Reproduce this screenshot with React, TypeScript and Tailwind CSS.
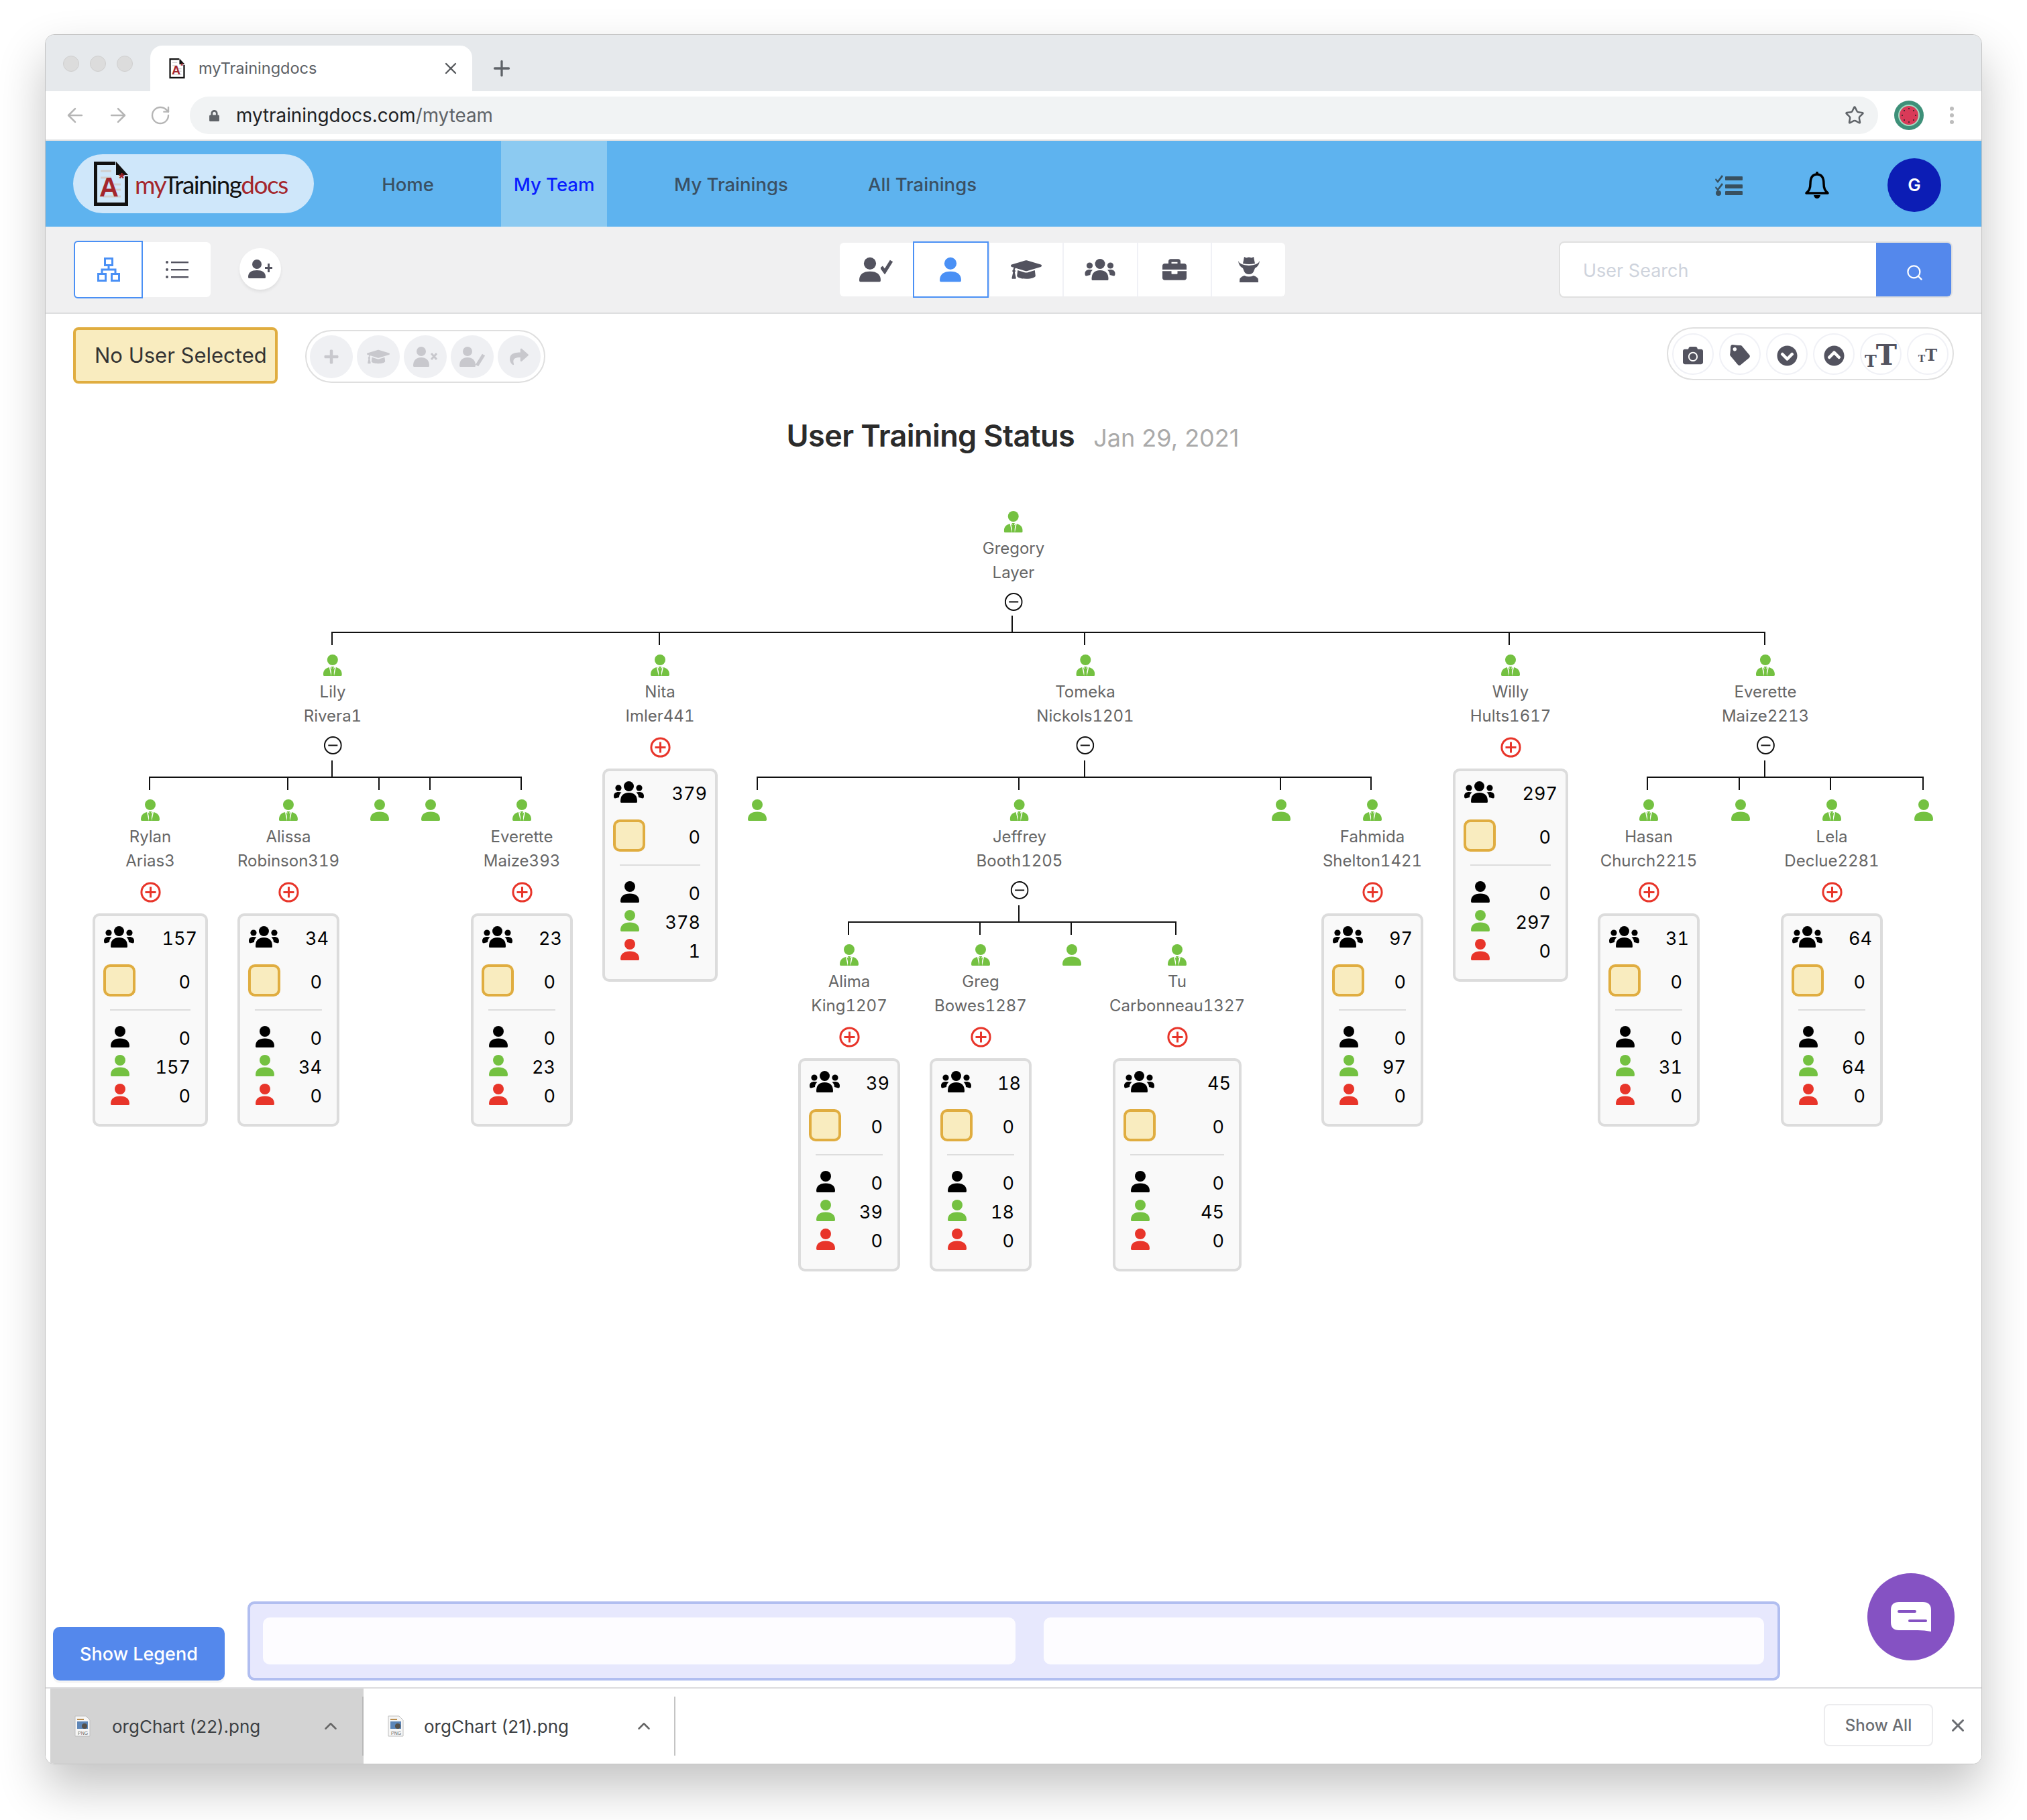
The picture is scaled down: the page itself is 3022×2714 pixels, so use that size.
import React from "react";
import { ArrowLeft, ArrowRight, RotateCw, Plus, X, Star, ChevronUp, Search } from "lucide-react";
import { FaGraduationCap, FaBriefcase, FaTag, FaCamera, FaChevronCircleDown, FaChevronCircleUp, FaPlus, FaShare, FaLock } from "react-icons/fa";

const BODY = "M1.5 32 Q0 32 0 30 C0 22.5 5 18.5 14 18.5 C23 18.5 28 22.5 28 30 Q28 32 26.5 32Z";

function Person({ color, className }: { color: string; className?: string }) {
  return (
    <svg viewBox="0 0 28 32" className={className ?? "w-[28px] h-[32px]"} fill={color}>
      <ellipse cx="14" cy="8" rx="8" ry="8" />
      <path d={BODY} />
    </svg>
  );
}

function TiePerson() {
  return (
    <svg viewBox="0 0 28 32" className="w-[28px] h-[32px]" fill="#74c141">
      <ellipse cx="14" cy="8" rx="8" ry="8" />
      <path d={BODY} />
      <path d="M9.5 18 L12.6 32 M18.5 18 L15.4 32" stroke="#fff" strokeWidth="1.5" fill="none" />
      <path d="M10.5 17.5 H17.5 V19 L15.6 21 H12.4 L10.5 19Z" fill="#fff" />
      <path d="M11.8 18 H16.2 L15.2 20.6 L16.2 32 H11.8 L12.8 20.6Z" fill="#74c141" />
    </svg>
  );
}

function Group({ color, className }: { color: string; className?: string }) {
  return (
    <svg viewBox="0 0 45 32" className={className ?? "w-[45px] h-[32px]"} fill={color}>
      <ellipse cx="22.5" cy="7.5" rx="7.5" ry="7.5" />
      <circle cx="7" cy="10" r="4.6" />
      <circle cx="38" cy="10" r="4.6" />
      <path d="M11 32 Q10 32 10 30 C10 22 14 17 22.5 17 C31 17 35 22 35 30 Q35 32 34 32Z" />
      <path d="M0 22 C0 18 3 16 7 16 L11.5 16.5 C9 19 8 21 8 24 L2 25.5 Q0 25.5 0 22Z" />
      <path d="M45 22 C45 18 42 16 38 16 L33.5 16.5 C36 19 37 21 37 24 L43 25.5 Q45 25.5 45 22Z" />
    </svg>
  );
}

function Toggle({ open }: { open: boolean }) {
  if (open) {
    return (
      <svg viewBox="0 0 27 27" className="w-[27px] h-[27px] mt-[12px] mb-[1px]" fill="none" stroke="#111" strokeWidth="2">
        <circle cx="13.5" cy="13.5" r="12.4" />
        <path d="M6.5 13.5 H20.5" />
      </svg>
    );
  }
  return (
    <svg viewBox="0 0 31 31" className="w-[31px] h-[31px] mt-[13px]" fill="none" stroke="#e8352a" strokeWidth="3">
      <circle cx="15.5" cy="15.5" r="13.6" />
      <path d="M7.5 15.5 H23.5 M15.5 7.5 V23.5" />
    </svg>
  );
}

function Num({ v }: { v: number }) {
  return <span className="pt-[5px] text-[27px] leading-none tabular-nums text-black">{v}</span>;
}

function Card({ w, total, green, red }: { w: number; total: number; green: number; red: number }) {
  return (
    <div className="mt-[16px] h-[318px] border-4 border-[#dcdcdc] rounded-[10px] bg-[#f9f9f9] flex flex-col" style={{ width: w }}>
      <div className="mt-[15px] h-[32px] pl-[13px] pr-[12px] flex items-center justify-between">
        <Group color="#000" />
        <Num v={total} />
      </div>
      <div className="mt-[25px] h-[48px] pl-[12px] pr-[22px] flex items-center justify-between">
        <div className="w-[48px] h-[48px] border-[4px] border-[#e0ad40] bg-[#f9ecbf] rounded-[10px]" />
        <Num v={0} />
      </div>
      <div className="mt-[19px] mx-[22px] h-[2px] bg-[#dddddd]" />
      <div className="mt-[23px] h-[32px] pl-[23px] pr-[22px] flex items-center justify-between">
        <Person color="#000" />
        <Num v={0} />
      </div>
      <div className="mt-[11px] h-[32px] pl-[23px] pr-[22px] flex items-center justify-between">
        <Person color="#74c141" />
        <Num v={green} />
      </div>
      <div className="mt-[11px] h-[32px] pl-[23px] pr-[22px] flex items-center justify-between">
        <Person color="#e8352a" />
        <Num v={red} />
      </div>
    </div>
  );
}

type N = { x: number; y: number; a?: string; b?: string; open?: boolean; w?: number; t?: number; g?: number; r?: number };
const L0 = 762, L1 = 976, L2 = 1192, L3 = 1408;

const nodes: N[] = [
  { x: 1511, y: L0, a: "Gregory", b: "Layer", open: true },
  { x: 496, y: L1, a: "Lily", b: "Rivera1", open: true },
  { x: 984, y: L1, a: "Nita", b: "Imler441", w: 172, t: 379, g: 378, r: 1 },
  { x: 1618, y: L1, a: "Tomeka", b: "Nickols1201", open: true },
  { x: 2252, y: L1, a: "Willy", b: "Hults1617", w: 172, t: 297, g: 297, r: 0 },
  { x: 2632, y: L1, a: "Everette", b: "Maize2213", open: true },
  { x: 224, y: L2, a: "Rylan", b: "Arias3", w: 172, t: 157, g: 157, r: 0 },
  { x: 430, y: L2, a: "Alissa", b: "Robinson319", w: 152, t: 34, g: 34, r: 0 },
  { x: 566, y: L2 },
  { x: 642, y: L2 },
  { x: 778, y: L2, a: "Everette", b: "Maize393", w: 152, t: 23, g: 23, r: 0 },
  { x: 1129, y: L2 },
  { x: 1520, y: L2, a: "Jeffrey", b: "Booth1205", open: true },
  { x: 1910, y: L2 },
  { x: 2046, y: L2, a: "Fahmida", b: "Shelton1421", w: 152, t: 97, g: 97, r: 0 },
  { x: 2458, y: L2, a: "Hasan", b: "Church2215", w: 152, t: 31, g: 31, r: 0 },
  { x: 2595, y: L2 },
  { x: 2731, y: L2, a: "Lela", b: "Declue2281", w: 152, t: 64, g: 64, r: 0 },
  { x: 2868, y: L2 },
  { x: 1266, y: L3, a: "Alima", b: "King1207", w: 152, t: 39, g: 39, r: 0 },
  { x: 1462, y: L3, a: "Greg", b: "Bowes1287", w: 152, t: 18, g: 18, r: 0 },
  { x: 1598, y: L3 },
  { x: 1755, y: L3, a: "Tu", b: "Carbonneau1327", w: 192, t: 45, g: 45, r: 0 },
];

const OX = 68, OY = 740;

function Node({ n }: { n: N }) {
  return (
    <div className="absolute w-max -translate-x-1/2 flex flex-col items-center" style={{ left: n.x - OX, top: n.y - OY }}>
      {n.a ? <TiePerson /> : <Person color="#74c141" />}
      {n.a && (
        <div className="mt-[6px] text-center text-[24px] leading-[36px] tabular-nums text-[#666666]">
          <div>{n.a}</div>
          <div>{n.b}</div>
        </div>
      )}
      {n.a && <Toggle open={!!n.open} />}
      {n.w && <Card w={n.w} total={n.t!} green={n.g!} red={n.r!} />}
    </div>
  );
}

type Conn = { px: number; y0: number; y: number; kids: number[]; yb: number };
const conns: Conn[] = [
  { px: 1509, y0: 918, y: 943, yb: 962, kids: [495, 983, 1617, 2250, 2631] },
  { px: 495, y0: 1134, y: 1159, yb: 1178, kids: [223, 429, 565, 641, 777] },
  { px: 1617, y0: 1134, y: 1159, yb: 1178, kids: [1129, 1519, 1909, 2044] },
  { px: 2631, y0: 1134, y: 1159, yb: 1178, kids: [2456, 2593, 2729, 2867] },
  { px: 1519, y0: 1350, y: 1375, yb: 1394, kids: [1265, 1461, 1597, 1753] },
];

function Connectors() {
  return (
    <svg className="absolute left-0 top-0 w-[2886px] h-[1600px]" viewBox="0 0 2886 1600" fill="none" stroke="#111" strokeWidth="2">
      {conns.map((c, i) => (
        <g key={i}>
          <path d={`M${c.px - OX} ${c.y0 - OY} V${c.y - OY}`} />
          <path d={`M${c.kids[0] - OX - 1} ${c.y - OY} H${c.kids[c.kids.length - 1] - OX + 1}`} />
          {c.kids.map((k) => (
            <path key={k} d={`M${k - OX} ${c.y - OY} V${c.yb - OY}`} />
          ))}
        </g>
      ))}
    </svg>
  );
}

function DocIcon({ className }: { className: string }) {
  return (
    <svg viewBox="0 0 51 66" className={className}>
      <path d="M0 0 H32 V5 H5 V61 H46 V22 H51 V66 H0Z" fill="#111" />
      <path d="M33 0 L51 20 H33Z" fill="#111" />
      <path d="M10 14 H26 M10 24 H26 M28 34 H40 M26 42 H40 M14 52 H40" stroke="#cfcfcf" strokeWidth="3" />
      <text x="8" y="52" fontFamily="'Liberation Sans', sans-serif" fontWeight="700" fontSize="40" fill="#a4262c">
        A<tspan dy="-20" fontSize="22">*</tspan>
      </text>
    </svg>
  );
}

function ActionCircle({ children }: { children: React.ReactNode }) {
  return <div className="w-[64px] h-[64px] rounded-full bg-[#eff0f3] flex items-center justify-center text-[#c8c8cd]">{children}</div>;
}

function ToolCircle({ children }: { children: React.ReactNode }) {
  return <div className="w-[62px] h-[62px] rounded-full bg-white border-2 border-[#f0f1f6] pt-[5px] flex items-center justify-center text-[#53535f]">{children}</div>;
}

function TabBtn({ children, active }: { children: React.ReactNode; active?: boolean }) {
  return (
    <div className={active ? "w-[113px] h-[84px] -my-[2px] border-2 border-[#4a90f5] bg-white flex items-center justify-center z-10" : "flex-1 h-full flex items-center justify-center border-l-2 first:border-l-0 border-[#f0f1f6]"}>
      {children}
    </div>
  );
}

function Cowboy() {
  return (
    <svg viewBox="0 0 32 38" className="w-[32px] h-[38px]" fill="#53535f">
      <path d="M9 0 L12 1.5 L16 0.5 L20 1.5 L23 0 L25 10 Q16 12 7 10Z" />
      <path d="M0 6 Q2 12 16 13 Q30 12 32 6 Q31 14 25 17 L23 22 Q21 26 16 26 Q11 26 9 22 L7 17 Q1 14 0 6Z" />
      <path d="M2 38 Q1 30 9 28 Q16 31 23 28 Q31 30 30 38Z" />
    </svg>
  );
}

function FileIcon() {
  return (
    <svg viewBox="0 0 24 32" className="w-[24px] h-[32px]">
      <path d="M1 1 H17 L23 7 V31 H1Z" fill="#f6f6f6" stroke="#bdbdbd" />
      <rect x="4" y="9" width="16" height="11" fill="#5d86b8" />
      <circle cx="15" cy="16" r="4" fill="#55504a" />
      <path d="M4 6 H14" stroke="#b98d4f" strokeWidth="2" />
      <text x="5" y="29" fontFamily="'Liberation Sans', sans-serif" fontSize="7" fill="#666">PNG</text>
    </svg>
  );
}

export default function App() {
  return (
    <div className="w-[3022px] h-[2714px] bg-white pt-[51px] pl-[67px] font-['Inter',sans-serif]">
      <div className="w-[2888px] h-[2580px] flex flex-col rounded-[14px] overflow-hidden border border-[#c4c4c4] bg-white shadow-[0_34px_70px_rgba(0,0,0,0.24)]">
        {/* Tab strip */}
        <div className="h-[84px] bg-[#e6e9ec] flex items-end shrink-0">
          <div className="flex gap-[16px] pl-[26px] pb-[29px] w-[156px]">
            <span className="w-[24px] h-[24px] rounded-full bg-[#dcdcdc] border border-[#cfcfcf] shrink-0" />
            <span className="w-[24px] h-[24px] rounded-full bg-[#dcdcdc] border border-[#cfcfcf] shrink-0" />
            <span className="w-[24px] h-[24px] rounded-full bg-[#dcdcdc] border border-[#cfcfcf] shrink-0" />
          </div>
          <div className="w-[480px] h-[68px] bg-white rounded-t-[18px] flex items-center pl-[28px] pr-[18px]">
            <DocIcon className="w-[24px] h-[30px]" />
            <span className="ml-[20px] text-[23.5px] text-[#5d6166]">myTrainingdocs</span>
            <X className="ml-auto text-[#55585c]" size={28} strokeWidth={2} />
          </div>
          <Plus className="ml-[26px] mb-[16px] text-[#5f6368]" size={36} strokeWidth={2.2} />
        </div>
        {/* Address bar */}
        <div className="h-[74px] bg-white border-b-2 border-[#dee0e2] flex items-center shrink-0">
          <ArrowLeft className="ml-[27px] text-[#b5b5b5]" size={34} strokeWidth={1.8} />
          <ArrowRight className="ml-[30px] text-[#b5b5b5]" size={34} strokeWidth={1.8} />
          <RotateCw className="ml-[30px] text-[#b5b5b5]" size={32} strokeWidth={1.8} />
          <div className="ml-[28px] w-[2517px] h-[56px] rounded-full bg-[#f1f3f4] flex items-center">
            <FaLock className="ml-[28px] text-[#5f6368]" size={17} />
            <span className="ml-[24px] pt-[2px] text-[27.8px] text-[#202124]">mytrainingdocs.com<span className="text-[#5f6368]">/myteam</span></span>
            <Star className="ml-auto mr-[20px] text-[#5f6368]" size={30} strokeWidth={2} />
          </div>
          <svg viewBox="0 0 44 44" className="ml-[24px] w-[44px] h-[44px]">
            <circle cx="22" cy="22" r="22" fill="#3e9079" />
            <circle cx="22" cy="22" r="16" fill="#a8dcc3" />
            <circle cx="22" cy="22" r="14" fill="#d93a58" />
            <g fill="#222">
              <circle cx="22" cy="12" r="1" /><circle cx="22" cy="32" r="1" /><circle cx="12" cy="22" r="1" /><circle cx="32" cy="22" r="1" />
              <circle cx="15" cy="15" r="1" /><circle cx="29" cy="15" r="1" /><circle cx="15" cy="29" r="1" /><circle cx="29" cy="29" r="1" />
            </g>
          </svg>
          <div className="ml-[39px] flex flex-col gap-[4px]">
            <span className="w-[6px] h-[6px] rounded-full bg-[#bdbdbd]" />
            <span className="w-[6px] h-[6px] rounded-full bg-[#bdbdbd]" />
            <span className="w-[6px] h-[6px] rounded-full bg-[#bdbdbd]" />
          </div>
        </div>
        {/* App header */}
        <div className="h-[128px] bg-[#5eb3ef] flex items-center shrink-0">
          <div className="ml-[41px] w-[359px] h-[88px] rounded-full bg-[#cfe7fa] flex items-center pl-[31px]">
            <DocIcon className="w-[51px] h-[66px]" />
            <span className="ml-[10px] text-[37px] leading-none tracking-[-1.5px] font-['Lato',sans-serif] text-[#a4262c]">my<span className="text-[#111]">Training</span>docs</span>
          </div>
          <div className="ml-[100px] w-[80px] pt-[3px] text-center text-[27.5px] font-medium text-[#3a5063]">Home</div>
          <div className="ml-[99px] w-[158px] h-full pt-[3px] bg-[#8ccaf1] flex items-center justify-center text-[27.5px] font-medium text-[#0a1eff]">My Team</div>
          <div className="ml-[100px] w-[170px] pt-[3px] text-center text-[27.5px] font-medium text-[#3a5063] whitespace-nowrap">My Trainings</div>
          <div className="ml-[119px] w-[162px] pt-[3px] text-center text-[27.5px] font-medium text-[#3a5063] whitespace-nowrap">All Trainings</div>
          <div className="ml-auto pr-[60px] pt-[3px] flex items-center">
            <svg viewBox="0 0 42 32" className="w-[42px] h-[32px]" fill="#38505f">
              <path d="M1 6 L4 9 L10 1 L12 3 L4 13 L0 8Z M1 18 L4 21 L10 13 L12 15 L4 25 L0 20Z" />
              <circle cx="5" cy="28" r="4" />
              <rect x="15" y="3" width="26" height="6" rx="1" /><rect x="15" y="15" width="26" height="6" rx="1" /><rect x="15" y="25" width="26" height="6" rx="1" />
            </svg>
            <svg viewBox="0 0 36 40" className="ml-[92px] w-[36px] h-[40px]" fill="none" stroke="#000" strokeWidth="3.5">
              <path d="M18 4 C10 4 8 11 8 18 C8 26 6 28 2 32 H34 C30 28 28 26 28 18 C28 11 26 4 18 4Z" strokeLinejoin="round" />
              <path d="M18 0 V4" />
              <path d="M13 35 H23 Q22 40 18 40 Q14 40 13 35Z" fill="#000" stroke="none" />
            </svg>
            <div className="ml-[87px] w-[80px] h-[80px] rounded-full bg-[#0c1db5] flex items-center justify-center text-white text-[26px] font-semibold">G</div>
          </div>
        </div>
        {/* Sub bar */}
        <div className="h-[130px] bg-[#f0f0f1] border-b-2 border-[#dedfe0] flex items-center shrink-0">
          <div className="ml-[42px] flex w-[204px] h-[82px] bg-white rounded-[6px]">
            <div className="w-[103px] h-[86px] -mt-[2px] border-2 border-[#4a90f5] rounded-l-[6px] bg-white flex items-center justify-center">
              <svg viewBox="0 0 34 36" className="w-[34px] h-[36px]" fill="none" stroke="#4a90f5" strokeWidth="3">
                <rect x="11.5" y="1.5" width="11" height="10" />
                <rect x="1.5" y="24.5" width="11" height="10" />
                <rect x="21.5" y="24.5" width="11" height="10" />
                <path d="M17 11 V18 M7 24 V18 H27 V24" />
              </svg>
            </div>
            <div className="flex-1 flex items-center justify-center">
              <svg viewBox="0 0 34 28" className="w-[34px] h-[28px]" fill="#53535f">
                <circle cx="2" cy="3" r="2" /><circle cx="2" cy="14" r="2" /><circle cx="2" cy="25" r="2" />
                <rect x="8" y="2" width="26" height="2.4" /><rect x="8" y="13" width="26" height="2.4" /><rect x="8" y="24" width="26" height="2.4" />
              </svg>
            </div>
          </div>
          <div className="ml-[43px] -mt-[3px] w-[62px] h-[62px] rounded-full bg-white shadow-[0_3px_4px_rgba(0,0,0,0.07)] flex items-center justify-center">
            <svg viewBox="0 0 36 28" className="w-[36px] h-[28px]" fill="#53535f">
              <ellipse cx="13" cy="7" rx="7" ry="7" />
              <path d="M1 28 Q0 28 0 26 C0 19 5 16 13 16 C21 16 26 19 26 26 Q26 28 25 28Z" />
              <path d="M29 6 H32 V11 H36 V14 H32 V19 H29 V14 H25 V11 H29Z" />
            </svg>
          </div>
          <div className="ml-[833px] w-[664px] h-[80px] bg-white rounded-[6px] flex items-center">
            <TabBtn><span className="flex items-end"><Person color="#53535f" className="w-[32px] h-[38px]" /><svg viewBox="0 0 18 22" className="w-[18px] h-[22px] mb-[12px]" fill="none" stroke="#53535f" strokeWidth="5"><path d="M1 11 L6 18 L16 2" /></svg></span></TabBtn>
            <TabBtn active><Person color="#4a90f5" className="w-[32px] h-[38px]" /></TabBtn>
            <TabBtn><FaGraduationCap className="text-[#53535f]" size={46} /></TabBtn>
            <TabBtn><Group color="#53535f" className="w-[46px] h-[32px]" /></TabBtn>
            <TabBtn><FaBriefcase className="text-[#53535f]" size={36} /></TabBtn>
            <TabBtn><Cowboy /></TabBtn>
          </div>
          <div className="ml-[408px] w-[587px] h-[84px] bg-white border-2 border-[#e0e0e0] rounded-[8px] flex overflow-hidden">
            <div className="flex-1 pl-[34px] pt-[4px] flex items-center text-[27px] text-[#ced3dc]">User Search</div>
            <div className="w-[112px] bg-[#5488ec] flex items-center justify-center">
              <Search className="mt-[8px] ml-[2px] text-white" size={27} strokeWidth={2} />
            </div>
          </div>
        </div>
        {/* Main */}
        <div className="flex-1 flex flex-col min-h-0">
          <div className="flex items-start pl-[41px] pr-[41px] pt-[20px] h-[104px] shrink-0">
            <div className="w-[305px] h-[84px] border-[4px] border-[#e0ad40] bg-[#f9ecbf] rounded-[8px] flex items-center pl-[28px] pt-[1px] text-[31px] text-[#333333]">
              <span className="whitespace-nowrap">No User Selected</span>
            </div>
            <div className="ml-[41px] mt-[4px] w-[358px] h-[79px] border-2 border-[#dfdfdf] rounded-full flex items-center pl-[5px] gap-[6px]">
              <ActionCircle><FaPlus size={24} /></ActionCircle>
              <ActionCircle><FaGraduationCap size={34} /></ActionCircle>
              <ActionCircle>
                <svg viewBox="0 0 36 30" className="w-[36px] h-[30px]" fill="currentColor">
                  <ellipse cx="12" cy="7" rx="7" ry="7" />
                  <path d="M1 30 Q0 30 0 28 C0 20 5 16 12 16 C19 16 24 20 24 28 Q24 30 23 30Z" />
                  <path d="M27 10 L35 19 M35 10 L27 19" stroke="currentColor" strokeWidth="3" />
                </svg>
              </ActionCircle>
              <ActionCircle>
                <svg viewBox="0 0 38 30" className="w-[38px] h-[30px]" fill="currentColor">
                  <ellipse cx="12" cy="7" rx="7" ry="7" />
                  <path d="M1 30 Q0 30 0 28 C0 20 5 16 12 16 C19 16 24 20 24 28 Q24 30 23 30Z" />
                  <path d="M26 28 L36 12" stroke="currentColor" strokeWidth="5" />
                </svg>
              </ActionCircle>
              <ActionCircle><FaShare size={28} /></ActionCircle>
            </div>
            <div className="ml-auto w-[428px] h-[79px] border-2 border-[#dfdfdf] rounded-full flex items-center pl-[6px] gap-[8px]">
              <ToolCircle><FaCamera size={30} /></ToolCircle>
              <ToolCircle><FaTag size={30} className="rotate-[5deg]" /></ToolCircle>
              <ToolCircle><FaChevronCircleDown size={31} /></ToolCircle>
              <ToolCircle><FaChevronCircleUp size={31} /></ToolCircle>
              <ToolCircle>
                <span className="flex items-end font-['DejaVu_Serif',serif] font-bold leading-none">
                  <span className="text-[24px]">T</span><span className="text-[42px] -ml-[1px]">T</span>
                </span>
              </ToolCircle>
              <ToolCircle>
                <span className="flex items-end font-['DejaVu_Serif',serif] font-bold leading-none">
                  <span className="text-[14px]">T</span><span className="text-[24px]">T</span>
                </span>
              </ToolCircle>
            </div>
          </div>
          <div className="h-[168px] shrink-0 flex justify-center items-baseline pt-[50px] pr-[2px]">
            <span className="text-[45px] leading-[56px] font-semibold tracking-[-0.6px] text-[#2b2b2b]">User Training Status</span>
            <span className="ml-[28px] text-[36px] leading-[56px] text-[#aaaaaa]">Jan 29, 2021</span>
          </div>
          <div className="relative h-[1606px] shrink-0">
            <Connectors />
            {nodes.map((n, i) => (
              <Node key={i} n={n} />
            ))}
          </div>
          <div className="flex-1 flex items-end pl-[11px] pb-[10px]">
            <div className="w-[256px] h-[80px] pt-[2px] rounded-[10px] bg-[#5488ec] shadow-[0_4px_0_rgba(0,0,0,0.04)] flex items-center justify-center text-white text-[27px] font-medium">Show Legend</div>
            <div className="ml-[34px] w-[2285px] h-[118px] border-4 border-[#b1bef0] bg-[#e7e8fd] rounded-[10px] flex items-center pl-[19px] pr-[20px] gap-[42px]">
              <div className="w-[1122px] h-[70px] rounded-[10px] bg-[#fdfcff]" />
              <div className="flex-1 h-[70px] rounded-[10px] bg-[#fdfcff]" />
            </div>
            <div className="ml-[130px] mb-[30px] w-[130px] h-[130px] rounded-full bg-[#8552c3] flex items-center justify-center">
              <svg viewBox="0 0 60 44" className="w-[60px] h-[44px]">
                <path d="M12 0 H48 Q60 0 60 12 V44 Q50 42 40 42 H12 Q0 42 0 30 V12 Q0 0 12 0Z" fill="#fff" />
                <rect x="10" y="12" width="28" height="4" rx="2" fill="#8552c3" />
                <rect x="26" y="26" width="28" height="4" rx="2" fill="#8552c3" />
              </svg>
            </div>
          </div>
        </div>
        {/* Downloads */}
        <div className="h-[114px] border-t-2 border-[#dcdcde] bg-white flex shrink-0">
          <div className="ml-[7px] w-[467px] bg-[#d3d3d3] flex items-center relative">
            <span className="ml-[36px]"><FileIcon /></span>
            <span className="ml-[32px] text-[26px] text-[#3c4043]">orgChart (22).png</span>
            <ChevronUp className="absolute left-[403px] text-[#666]" size={30} strokeWidth={2} />
            <span className="absolute right-0 top-[12px] bottom-[12px] w-[2px] bg-[#b8b8b8]" />
          </div>
          <div className="w-[465px] flex items-center relative">
            <span className="ml-[36px]"><FileIcon /></span>
            <span className="ml-[30px] text-[26px] text-[#3c4043]">orgChart (21).png</span>
            <ChevronUp className="absolute left-[403px] text-[#666]" size={30} strokeWidth={2} />
            <span className="absolute right-0 top-[12px] bottom-[12px] w-[2px] bg-[#c4c4c4]" />
          </div>
          <div className="ml-auto flex items-center pr-[20px] -mt-[3px]">
            <div className="w-[163px] h-[63px] border-2 border-[#ececee] rounded-[8px] flex items-center justify-center text-[24px] font-medium text-[#6b6e73]">Show All</div>
            <X className="ml-[22px] text-[#6b6e73]" size={30} strokeWidth={2.4} />
          </div>
        </div>
      </div>
    </div>
  );
}
